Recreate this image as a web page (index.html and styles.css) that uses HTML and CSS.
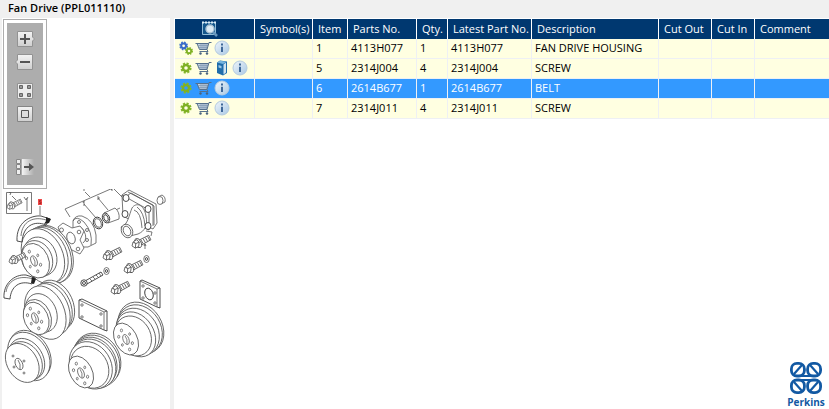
FILE: index.html
```html
<!DOCTYPE html>
<html lang="en">
<head>
<meta charset="utf-8">
<title>Fan Drive (PPL011110)</title>
<link rel="stylesheet" href="styles.css">
</head>
<body>
<svg class="defs" aria-hidden="true">
  <defs>
    <linearGradient id="key" x1="0" y1="0" x2="0" y2="1"><stop offset="0" stop-color="#f4f4f4"/><stop offset="1" stop-color="#cfcfcf"/></linearGradient>
    <linearGradient id="fade"><stop offset="0" stop-color="#f4f4f4"/><stop offset="1" stop-color="#adadad"/></linearGradient>
    <linearGradient id="ball" x1="0" y1="0" x2="1" y2="1"><stop offset="0" stop-color="#f0f6fb"/><stop offset="1" stop-color="#a9c8e4"/></linearGradient>
    <symbol id="gear" viewBox="0 0 14 14">
      <circle cx="7" cy="7" r="4.6" fill="none" stroke="#86b82b" stroke-width="2" stroke-dasharray="2.1 1.51"/>
      <circle cx="7" cy="7" r="3" fill="none" stroke="#7fb024" stroke-width="2.4"/>
    </symbol>
    <symbol id="gears" viewBox="0 0 14 14">
      <circle cx="4.6" cy="4.8" r="3.5" fill="none" stroke="#3f73cf" stroke-width="1.8" stroke-dasharray="1.6 1.15"/>
      <circle cx="4.6" cy="4.8" r="2.4" fill="none" stroke="#3a6cc8" stroke-width="2"/>
      <circle cx="10" cy="10" r="3.2" fill="none" stroke="#86b82b" stroke-width="1.6" stroke-dasharray="1.5 1.01"/>
      <circle cx="10" cy="10" r="2.2" fill="none" stroke="#7fb024" stroke-width="1.8"/>
    </symbol>
    <symbol id="cart" viewBox="0 0 16 14">
      <path d="M2 2.5H13L11.5 8.5H4Z" fill="#c3d2e0"/>
      <path d="M5.500 3V8.500M7.500 3V8.500M9.500 3V8.500M11.500 3L11 8.500M3 4.500H12.500M3.500 6.500H12" fill="none" stroke="#7d97b0" stroke-width=".7"/>
      <path d="M0 2.500H13M1.500 2.500L4 8.500H11.500L13.500 1.500H16M11.500 8.500L12.500 10.500H4" fill="none" stroke="#56718d"/>
      <circle cx="5" cy="12.500" r="1.200" fill="#48637f"/><circle cx="11.500" cy="12.500" r="1.200" fill="#48637f"/>
    </symbol>
    <symbol id="info" viewBox="0 0 16 16">
      <circle cx="8" cy="8" r="7" fill="url(#ball)" stroke="#b4cbe0"/>
      <path d="M8 3.6V5.4M8 6.7V12" stroke="#3f6899" stroke-width="2"/>
    </symbol>
    <symbol id="book" viewBox="0 0 12 16">
      <path d="M1 2.500L4 .5L11 1.500V13L7 15.500L1 13Z" fill="#1f6dab"/>
      <path d="M1 2.500L4 .8L10.500 1.800L7 4Z" fill="#77b6df"/>
      <path d="M7.500 4.500L10 2.500V12.500L7.500 14.500Z" fill="#cfe4f2"/>
      <path d="M2.500 5L5.500 6V8.500L2.500 7.500Z" fill="#9cc8e4"/>
    </symbol>
    <symbol id="bolt" viewBox="0 0 18 12" overflow="visible">
      <path d="M5 5L15 0L17 4L8 9" class="w"/>
      <path d="M8 4L10 7.5M10 3L12 6.5M12 2L14 5.5M14 1L16 4.5" class="n"/>
      <ellipse cx="5.5" cy="7" rx="2.7" ry="4.4" transform="rotate(-25 5.5 7)" class="w"/>
      <path d="M1 6L4 4L6.5 6L6 10L3 11.5L0 9.5ZM1 6L3.4 7.5L6.5 6M3.4 7.5L3 11.5" class="w"/>
    </symbol>
    <symbol id="pattern" viewBox="-12 -16 24 32" overflow="visible">
      <ellipse rx="3.2" ry="5.8" transform="rotate(-22)" class="w"/>
      <path d="M-1-4Q2 0 1 5" class="n"/>
      <g class="w"><ellipse cx="-5" cy="-10" rx="1.2" ry="1.6"/><ellipse cx="4" cy="-6" rx="1" ry="1.4"/><ellipse cx="7" cy="4" rx="1.2" ry="1.6"/><ellipse cx="4" cy="11" rx="1.2" ry="1.6"/><ellipse cx="-4" cy="6" rx="1" ry="1.4"/><ellipse cx="-8" cy="-3" rx="1.2" ry="1.6"/></g>
    </symbol>
  </defs>
</svg>

<header class="title"><h1>Fan Drive (PPL011110)</h1></header>
<main class="workspace">
  <section class="viewer" aria-label="Illustration">
    <div class="toolbar">
      <button type="button" aria-label="Zoom in"><svg viewBox="0 0 20 16"><path d="M2.5.5H17.5V6L19.5 8L17.5 10V15.5H2.5Z" fill="url(#key)" stroke="#929292"/><path d="M5 8H15M10 3V13" stroke="#555" stroke-width="2"/></svg></button>
      <button type="button" aria-label="Zoom out"><svg viewBox="0 0 20 16"><path d="M2.5.5H17.5V15.5H2.5V10L.5 8L2.5 6Z" fill="url(#key)" stroke="#929292"/><path d="M5 8H15" stroke="#555" stroke-width="2"/></svg></button>
      <button type="button" class="group" aria-label="Tile"><svg viewBox="0 0 20 16"><path d="M2.5.5H17.5V15.5H2.5Z" fill="#ededed" stroke="#929292"/><path d="M4.500 2.500h3v3h-3zM12.500 2.500h3v3h-3zM4.500 10.500h3v3h-3zM12.500 10.500h3v3h-3z" fill="#999" stroke="#666"/></svg></button>
      <button type="button" aria-label="Fit"><svg viewBox="0 0 20 16"><path d="M2.5.5H17.5V15.5H2.5Z" fill="url(#key)" stroke="#858585"/><path d="M6.500 4.500h7v7h-7z" fill="#ddd" stroke="#555"/></svg></button>
      <button type="button" class="exit" aria-label="Hide panel"><svg viewBox="0 0 20 16"><path d="M7 0H19V16H7Z" fill="url(#fade)"/><path d="M1.5.5h4v4h-4zM1.5 5.500h4v4h-4zM1.5 10.500h4v5h-4z" fill="#eee" stroke="#888"/><path d="M9 8H15" stroke="#555" stroke-width="2"/><path d="M14 4L19 8L14 12Z" fill="#555"/></svg></button>
    </div>
    <svg class="drawing" viewBox="2 189 168 205" role="img" aria-label="Fan drive parts">
      <!-- framed bolt -->
      <path d="M6.500 192.500H31.500V213.500H6.500Z" class="n"/>
      <path d="M9 192.500H11L10 195M12 196L16 200M27 198V211M24 197L26 200L28 197" class="n"/>
      <g class="bold"><use href="#bolt" x="7" y="199" width="16" height="11"/></g>
      <!-- leader lines -->
      <path d="M84 187V191M85 192L90 197M65 209L113 188L122 197M65 209L70 217M98 198L108 210M84 204L96 218M111 190L113 188M83 203L84 201V206M97 197h2v2h-2M111 190h2M109 213L120 208" class="n"/>
      <!-- housing -->
      <path d="M122 195L129 190L156 204L157 223L153 229L127 216Z" class="w"/>
      <path d="M124 198L131 193L154 206L154 225M128 192L153 205V226M122 195L149 210V230L123 216Z" class="w"/>
      <path d="M132 208C136 202 144 204 146 216C148 225 145 231 138 234L126 237L121 227C128 225 129 215 132 208Z" class="w"/>
      <path d="M134 210Q141 212 142 228M137 207Q144 212 145 226" class="n"/>
      <ellipse cx="127" cy="231" rx="5.500" ry="7" transform="rotate(-25 127 231)" class="w"/>
      <ellipse cx="127" cy="231" rx="3.500" ry="5" transform="rotate(-25 127 231)" class="w"/>
      <g class="b"><ellipse cx="126" cy="198" rx="3" ry="3.500"/><ellipse cx="148" cy="209" rx="3" ry="3.500"/><ellipse cx="125" cy="214" rx="3" ry="3.500"/><ellipse cx="148" cy="226" rx="3" ry="3.500"/></g>
      <path d="M158 197L162 195Q166 197 165 202L161 204" class="w"/><ellipse cx="160" cy="200.500" rx="3" ry="4" class="w"/>
      <!-- bearing and ring -->
      <path d="M104 213L115 208Q120 212 119 219L108 223Z" class="w"/><ellipse cx="106" cy="218" rx="3.500" ry="5" transform="rotate(-20 106 218)" class="b"/><ellipse cx="106" cy="218" rx="2" ry="3.500" transform="rotate(-20 106 218)" class="b"/>
      <ellipse cx="98" cy="223" rx="4.500" ry="6" transform="rotate(-20 98 223)" class="b"/><ellipse cx="98" cy="223" rx="3" ry="4.500" transform="rotate(-20 98 223)" class="w"/>
      <!-- hub and flange -->
      <path d="M73 221Q75 215 82 216Q94 220 96 235V243L88 247L80 247L73 240Z" class="w"/>
      <path d="M73 221Q76 215 84 222Q93 232 91 245M76 228Q81 225 84 231Q88 239 83 243" class="n"/>
      <circle cx="79" cy="222" r="1.500" class="w"/><circle cx="87" cy="230" r="1.500" class="w"/><circle cx="87" cy="240" r="1.500" class="w"/>
      <path d="M58 227L63 223L72 228L80 226L84 231L80 240L84 248L80 254L70 249L60 251L58 246L62 238Z" class="w"/>
      <ellipse cx="71" cy="238" rx="4" ry="6" transform="rotate(-20 71 238)" class="w"/><circle cx="61.500" cy="230" r="2" class="w"/><circle cx="79" cy="232" r="1.800" class="w"/><circle cx="78" cy="249" r="1.800" class="w"/>
      <!-- top pulley -->
      <g transform="rotate(-24 48 253)"><ellipse cx="50" cy="255" rx="21" ry="30" class="w"/><ellipse cx="48" cy="255" rx="21" ry="30" class="w"/><ellipse cx="45" cy="254" rx="21" ry="29" class="w"/><ellipse cx="42" cy="254" rx="20" ry="29" class="w"/></g>
      <g transform="rotate(-24 37 259)"><ellipse cx="41" cy="258" rx="16" ry="20" class="w"/><ellipse cx="37" cy="259" rx="15" ry="19" class="w"/><ellipse cx="35" cy="260" rx="13" ry="18" class="w"/></g>
      <use href="#pattern" x="22" y="246" width="24" height="30"/>
      <path d="M17 241C16 222 31 215 41 216L50 219L46 225C34 220 23 226 22 242Z" class="b"/><path d="M21 236C22 221 34 216 46 220" class="n"/><path d="M46 217L51 219L49 223L44 224L46 221Z" class="k"/>
      <g class="bold"><use href="#bolt" x="9" y="252" width="18" height="13"/></g>
      <!-- centre pulley -->
      <g transform="rotate(-24 49 311)"><ellipse cx="57" cy="308" rx="18" ry="26" class="w"/><ellipse cx="54" cy="309" rx="18" ry="26" class="w"/><ellipse cx="51" cy="310" rx="18" ry="27" class="w"/><ellipse cx="45" cy="311" rx="19" ry="28" class="w"/></g>
      <g transform="rotate(-24 39 315)"><ellipse cx="42" cy="314" rx="15" ry="20" class="w"/><ellipse cx="37" cy="316" rx="13" ry="18" class="w"/><ellipse cx="35" cy="317" rx="12" ry="17" class="w"/></g>
      <use href="#pattern" x="23" y="303" width="24" height="30"/>
      <path d="M4 298C3 284 14 274 26 275L35 278L32 284C20 280 11 286 10 299Z" class="b"/><path d="M6 292C8 279 21 275 33 279" class="n"/><path d="M32 277L36 279L34 284L31 283Z" class="k"/>
      <!-- lower left pulley -->
      <g transform="rotate(-32 28 357)"><ellipse cx="31" cy="356" rx="19" ry="26" class="w"/><ellipse cx="29" cy="357" rx="19" ry="26" class="w"/><ellipse cx="26" cy="358" rx="16" ry="22" class="w"/><ellipse cx="23" cy="359" rx="16" ry="21" class="w"/><ellipse cx="20" cy="359" rx="15" ry="21" class="w"/></g>
      <ellipse cx="19" cy="364" rx="3.500" ry="6" transform="rotate(-24 19 364)" class="w"/><path d="M18 360Q21 364 20 369" class="n"/><g class="w"><circle cx="13" cy="356" r="1"/><circle cx="24" cy="361" r="1"/><circle cx="24" cy="373" r="1"/><circle cx="14" cy="367" r="1"/></g>
      <!-- lower centre pulley -->
      <g transform="rotate(-32 94 361)"><ellipse cx="98" cy="361" rx="22" ry="27" class="w"/><ellipse cx="96" cy="362" rx="22" ry="27" class="w"/><ellipse cx="94" cy="362" rx="21" ry="26" class="w"/><ellipse cx="92" cy="363" rx="21" ry="26" class="w"/><ellipse cx="89" cy="363" rx="20" ry="25" class="w"/><ellipse cx="87" cy="364" rx="18" ry="22" class="w"/></g>
      <ellipse cx="81" cy="372" rx="11" ry="17" transform="rotate(-28 81 372)" class="w"/>
      <use href="#pattern" x="69" y="358" width="24" height="30"/>
      <!-- right pulley -->
      <g transform="rotate(-32 139 330)"><ellipse cx="142" cy="329" rx="21" ry="27" class="w"/><ellipse cx="140" cy="330" rx="21" ry="26" class="w"/><ellipse cx="137" cy="331" rx="20" ry="25" class="w"/><ellipse cx="134" cy="332" rx="18" ry="24" class="w"/><ellipse cx="131" cy="332" rx="17" ry="21" class="w"/></g>
      <ellipse cx="126" cy="339" rx="11" ry="17" transform="rotate(-28 126 339)" class="w"/>
      <use href="#pattern" x="114" y="325" width="24" height="29"/>
      <!-- plates -->
      <path d="M79 300L82 299L107 311V331L104 330L79 318Z" class="b"/><path d="M79 300L104 312V330M104 312L107 311" class="n"/><circle cx="82" cy="305" r="1.200" class="w"/><circle cx="101" cy="314" r="1.200" class="w"/><circle cx="82" cy="317" r="1.200" class="w"/><circle cx="101" cy="326" r="1.200" class="w"/>
      <path d="M140 281L142 280L160 288V308L157 307L140 299Z" class="b"/><path d="M140 281L157 289V307M157 289L160 288" class="n"/><ellipse cx="149" cy="294" rx="4" ry="6" transform="rotate(-20 149 294)" class="b"/><circle cx="143" cy="286" r="1.200" class="w"/><circle cx="155" cy="293" r="1.200" class="w"/><circle cx="143" cy="298" r="1.200" class="w"/><circle cx="155" cy="303" r="1.200" class="w"/>
      <!-- loose bolts and washers -->
      <g class="bold"><use href="#bolt" x="132" y="235" width="20" height="14"/>
      <use href="#bolt" x="103" y="247" width="20" height="14"/>
      <use href="#bolt" x="124" y="260" width="20" height="14"/>
      <use href="#bolt" x="111" y="281" width="20" height="14"/></g>
      <path d="M151 236L152 232L146 231M145 249V244M144 246L145 244L146 246" class="n"/>
      <path d="M85 281L101 272L103 275L87 284Z" class="b"/><path d="M90 279L92 281M93 277L95 279M96 275L98 277M99 273L101 276" class="n"/><circle cx="84" cy="283" r="3.200" class="b"/><circle cx="84" cy="283" r="1.500" class="b"/>
      <ellipse cx="106.500" cy="271" rx="2.700" ry="3.500" class="w"/><ellipse cx="106.500" cy="271" rx="1" ry="1.500" class="b"/>
      <ellipse cx="146.500" cy="259" rx="2.700" ry="3.500" class="w"/><ellipse cx="146.500" cy="259" rx="1" ry="1.500" class="b"/>
      <!-- selected callout -->
      <path d="M40 206V215" class="n"/><path d="M38 199H42V205H38Z" fill="#f04a4a"/><path d="M41 200.500H39.500V202H41V203.500H39" fill="none" stroke="#8d1010" stroke-width=".6"/>
    </svg>
  </section>

  <section class="parts" aria-label="Parts list">
    <table>
      <colgroup><col class="c-tools"><col class="c-symbol"><col class="c-item"><col class="c-part"><col class="c-qty"><col class="c-latest"><col class="c-desc"><col class="c-out"><col class="c-in"><col></colgroup>
      <thead>
        <tr><th><svg class="search" viewBox="0 0 16 16" role="img" aria-label="Search"><path d="M.5 1.500H13.500V13.500H.500Z" fill="#12568c" stroke="#8fbcd8"/><path d="M0 1.500H14" stroke="#d9ecf7" stroke-width="2" stroke-dasharray="2 1"/><circle cx="8" cy="8" r="4" fill="#dcebf5" stroke="#a9c2d4" stroke-width="1.500"/><path d="M11 11L15 15" stroke="#6797bd" stroke-width="2.500"/></svg></th><th>Symbol(s)</th><th>Item</th><th>Parts No.</th><th>Qty.</th><th>Latest Part No.</th><th>Description</th><th>Cut Out</th><th>Cut In</th><th>Comment</th></tr>
      </thead>
      <tbody>
        <tr><td><div class="icons"><svg class="g"><use href="#gears"/></svg><svg class="c"><use href="#cart"/></svg><svg class="i"><use href="#info"/></svg></div></td><td></td><td>1</td><td>4113H077</td><td>1</td><td>4113H077</td><td>FAN DRIVE HOUSING</td><td></td><td></td><td></td></tr>
        <tr><td><div class="icons"><svg class="g"><use href="#gear"/></svg><svg class="c"><use href="#cart"/></svg><svg class="i"><use href="#book"/></svg><svg class="i"><use href="#info"/></svg></div></td><td></td><td>5</td><td>2314J004</td><td>4</td><td>2314J004</td><td>SCREW</td><td></td><td></td><td></td></tr>
        <tr class="selected"><td><div class="icons"><svg class="g"><use href="#gear"/></svg><svg class="c"><use href="#cart"/></svg><svg class="i"><use href="#info"/></svg></div></td><td></td><td>6</td><td>2614B677</td><td>1</td><td>2614B677</td><td>BELT</td><td></td><td></td><td></td></tr>
        <tr><td><div class="icons"><svg class="g"><use href="#gear"/></svg><svg class="c"><use href="#cart"/></svg><svg class="i"><use href="#info"/></svg></div></td><td></td><td>7</td><td>2314J011</td><td>4</td><td>2314J011</td><td>SCREW</td><td></td><td></td><td></td></tr>
      </tbody>
    </table>
    <div class="brand">
      <svg viewBox="0 0 34 34" aria-hidden="true"><g fill="none" stroke="#1259a3" stroke-width="2.800"><rect x="2.400" y="2.400" width="13" height="12.600" rx="5.500"/><rect x="18.600" y="2.400" width="13" height="12.600" rx="5.500"/><rect x="2.400" y="19" width="13" height="12.600" rx="5.500"/><rect x="18.600" y="19" width="13" height="12.600" rx="5.500"/></g><path d="M5 13L13 4M21 4L29 13M5 21L13 30M21 30L29 21" fill="none" stroke="#1259a3" stroke-width="2.200"/><path d="M7 15H27M7 19H27" stroke="#1259a3" stroke-width="2"/></svg>
      <span>Perkins</span>
    </div>
  </section>
</main>
</body>
</html>
```
FILE: styles.css
```css
* { box-sizing: border-box; }

body {
  display: flex;
  flex-direction: column;
  min-height: 100vh;
  margin: 0;
  background: #f0f0f0;
  color: #000;
  font: 11px/16px "Open Sans", "Noto Sans", sans-serif;
}

.defs { position: absolute; width: 0; height: 0; }

.title { height: 18px; padding: 0 8px; }
.title h1 { margin: 0; font-size: 11px; line-height: 16px; font-weight: 600; }

.workspace { display: flex; flex: 1; gap: 4px; padding-left: 2px; }

.viewer { flex: 0 0 168px; background: #fff; }

.toolbar {
  display: flex;
  flex-direction: column;
  align-items: center;
  gap: 7px;
  width: 44px;
  margin: 1px 0 0 1px;
  padding: 8px 0 10px;
  border: 1px solid #adadad;
  background: #adadad;
  box-shadow: inset 0 0 0 3px #fff;
}
.toolbar button { display: block; width: 20px; height: 16px; padding: 0; border: 0; background: none; }
.toolbar svg { display: block; width: 20px; height: 16px; }
.toolbar button:first-child { margin-top: 3px; }
.toolbar .group { margin-top: 6px; }
.toolbar .exit { margin: 30px 0 3px; }

.drawing { display: block; width: 100%; }
.w, .n, .b { stroke: #555; stroke-width: 0.8; stroke-linejoin: round; }
.w, .b { fill: #fff; }
.n { fill: none; }
.b { stroke: #222; }
.k { fill: #222; }

.parts { display: flex; flex: 1; flex-direction: column; min-width: 0; padding: 1px 0 0 1px; background: #fff; }

table { width: 100%; border-collapse: separate; border-spacing: 0; table-layout: fixed; }
.c-tools { width: 80px; }
.c-symbol { width: 58px; }
.c-item { width: 35px; }
.c-part { width: 69px; }
.c-qty { width: 31px; }
.c-latest { width: 84px; }
.c-desc { width: 127px; }
.c-out { width: 53px; }
.c-in { width: 43px; }

th, td { height: 20px; padding: 0 3px; border-right: 1px solid #eef0f4; white-space: nowrap; text-align: left; }
th { padding: 0 5px; border-color: #fff; background: #003870; color: #fff; font-weight: 400; }
th:first-child { padding-left: 27px; }
td { padding-bottom: 2px; border-bottom: 1px solid #eef0f4; background: #ffffe1; }
td:first-child { padding-bottom: 1px; }
th:last-child, td:last-child { border-right: 0; }
.selected td { background: #3399ff; color: #fff; }

.search { display: block; width: 16px; height: 16px; }
.icons { display: flex; align-items: center; gap: 2px; padding-left: 1px; }
.icons svg { flex: none; }
.g { width: 14px; height: 14px; }
.c { width: 17px; height: 14px; }
.i { width: 16px; height: 16px; }

.brand { align-self: flex-end; width: 40px; margin: auto 3px 0 0; color: #1259a3; font: 700 10px/14px "Open Sans", sans-serif; text-align: center; }
.brand svg { display: block; width: 34px; height: 34px; margin: 0 auto; }
.brand span { display: block; }
```
